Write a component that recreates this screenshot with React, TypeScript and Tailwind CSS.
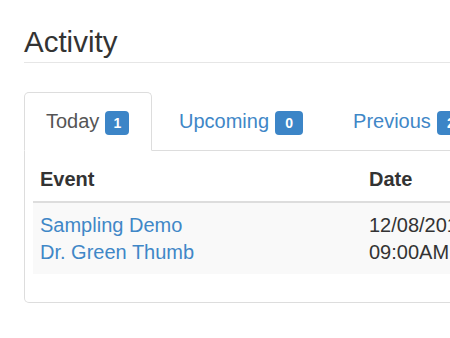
import React from "react";

export default function App() {
  const font = { fontFamily: '"Liberation Sans", Arial, sans-serif' };
  return (
    <div className="w-[450px] h-[338px] overflow-hidden bg-white text-[#333]" style={font}>
      <div className="pl-[24px]">
        <div className="mt-[26px] w-[460px] pb-[3px] border-b border-[#e6e6e6]">
          <h2 className="text-[29.5px] leading-[32.5px] font-normal">Activity</h2>
        </div>
        <div className="mt-[29px] w-[560px]">
          <div className="flex items-end border-b border-[#ddd] text-[20px] leading-[27.5px]">
            <div className="-mb-px flex items-center px-[21px] pt-[15px] pb-[15px] border border-[#ddd] border-b-white bg-white rounded-t-[5px] w-[128px]">
              <span className="text-[#555]">Today</span>
              <span className="ml-[6px] flex items-center justify-center w-[24px] h-[24px] rounded-[4px] bg-[#3c85c7] text-white text-[14px] font-bold leading-none mt-[3px]">1</span>
            </div>
            <div className="-mb-px ml-[4px] flex items-center px-[22px] pt-[15px] pb-[15px] border border-transparent">
              <span className="text-[#3f87c7]">Upcoming</span>
              <span className="ml-[6px] flex items-center justify-center w-[28px] h-[24px] rounded-[4px] bg-[#3c85c7] text-white text-[14px] font-bold leading-none mt-[3px]">0</span>
            </div>
            <div className="-mb-px ml-[4px] flex items-center px-[22px] pt-[15px] pb-[15px] border border-transparent">
              <span className="text-[#3f87c7]">Previous</span>
              <span className="ml-[6px] flex items-center justify-center w-[28px] h-[24px] rounded-[4px] bg-[#3c85c7] text-white text-[14px] font-bold leading-none mt-[3px]">2</span>
            </div>
          </div>
          <div className="border-l border-r border-b border-[#ddd] rounded-b-[5px] pt-[8px] px-[8px] pb-[28px] text-[20px] leading-[27.5px]">
            <div className="grid grid-cols-[329px_1fr] border-b-2 border-[#ddd] font-bold">
              <div className="px-[7px] py-[7px]">Event</div>
              <div className="px-[7px] py-[7px]">Date</div>
            </div>
            <div className="grid grid-cols-[329px_1fr] bg-[#f9f9f9]">
              <div className="px-[7px] pt-[9px] pb-[7px] text-[#3f87c7]">
                <div>Sampling Demo</div>
                <div>Dr. Green Thumb</div>
              </div>
              <div className="px-[7px] pt-[9px] pb-[7px] whitespace-nowrap">
                <div>12/08/2016</div>
                <div>09:00AM</div>
              </div>
            </div>
          </div>
        </div>
      </div>
    </div>
  );
}
